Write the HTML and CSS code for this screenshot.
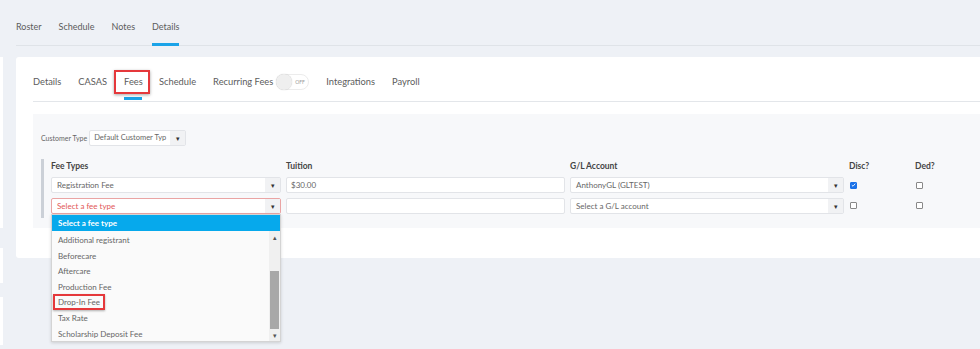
FILE: index.html
```html
<!DOCTYPE html>
<html>
<head>
    <title>Class Details - Fees</title>
    <link rel="stylesheet" href="styles.css">
</head>
<body>
    <div class="page">
        <div class="side">
            <div class="side-block first"></div>
            <div class="side-block second"></div>
            <div class="side-block third"></div>
        </div>

        <div class="main">
            <div class="top-nav">
                <span class="top-tab">Roster</span>
                <span class="top-tab">Schedule</span>
                <span class="top-tab">Notes</span>
                <span class="top-tab active">Details</span>
            </div>

            <div class="card">
                <div class="sub-nav">
                    <span class="sub-tab">Details</span>
                    <span class="sub-tab">CASAS</span>
                    <span class="sub-tab active marked">Fees</span>
                    <span class="sub-tab">Schedule</span>
                    <span class="sub-tab with-toggle">Recurring Fees
                        <span class="toggle"><span class="knob"></span><span class="toggle-text">OFF</span></span>
                    </span>
                    <span class="sub-tab">Integrations</span>
                    <span class="sub-tab">Payroll</span>
                </div>

                <div class="panel">
                    <div class="customer-type">
                        <span class="small-label">Customer Type</span>
                        <div class="select small">
                            <span class="select-text">Default Customer Typ</span>
                            <span class="arrow">&#9662;</span>
                        </div>
                    </div>

                    <div class="fees">
                        <div class="fee-grid">
                            <div class="col-head">Fee Types</div>
                            <div class="col-head">Tuition</div>
                            <div class="col-head">G/L Account</div>
                            <div class="col-head">Disc?</div>
                            <div class="col-head">Ded?</div>

                            <div class="select">
                                <span class="select-text">Registration Fee</span>
                                <span class="arrow">&#9662;</span>
                            </div>
                            <div class="input">$30.00</div>
                            <div class="select">
                                <span class="select-text">AnthonyGL (GLTEST)</span>
                                <span class="arrow">&#9662;</span>
                            </div>
                            <div class="check-cell"><span class="check checked">
                                <svg viewBox="0 0 8 8" width="6" height="6"><path d="M1.3 4.2 L3.2 6 L6.8 1.8" fill="none" stroke="#fff" stroke-width="1.4"/></svg>
                            </span></div>
                            <div class="check-cell"><span class="check"></span></div>

                            <div class="select invalid open">
                                <span class="select-text">Select a fee type</span>
                                <span class="arrow">&#9662;</span>
                                <div class="dropdown">
                                    <div class="drop-head">Select a fee type</div>
                                    <div class="drop-body">
                                        <ul class="drop-list">
                                            <li>Additional registrant</li>
                                            <li>Beforecare</li>
                                            <li>Aftercare</li>
                                            <li>Production Fee</li>
                                            <li><span class="marked-item">Drop-In Fee</span></li>
                                            <li>Tax Rate</li>
                                            <li>Scholarship Deposit Fee</li>
                                        </ul>
                                        <div class="scrollbar">
                                            <span class="scroll-arrow">&#9652;</span>
                                            <span class="thumb"></span>
                                            <span class="scroll-arrow">&#9662;</span>
                                        </div>
                                    </div>
                                </div>
                            </div>
                            <div class="input"></div>
                            <div class="select">
                                <span class="select-text">Select a G/L account</span>
                                <span class="arrow">&#9662;</span>
                            </div>
                            <div class="check-cell"><span class="check"></span></div>
                            <div class="check-cell"><span class="check"></span></div>
                        </div>
                    </div>
                </div>
            </div>
        </div>
    </div>
</body>
</html>
```

FILE: styles.css
```css
body {
    margin: 0;
    background-color: #eef1f6;
    font-family: Lato, "Open Sans", sans-serif;
    color: #5c5c5c;
    height: 349px;
    overflow: hidden;
}
.page {
    display: flex;
}
.side {
    width: 3px;
    display: flex;
    flex-direction: column;
}
.side-block {
    background: #fff;
}
.side-block.first {
    margin-top: 57px;
    height: 171px;
}
.side-block.second {
    margin-top: 20px;
    height: 35px;
}
.side-block.third {
    margin-top: 14px;
    height: 48px;
}
.main {
    flex: 1;
    padding-left: 13px;
}

/* top tabs */
.top-nav {
    display: flex;
    gap: 17px;
    border-bottom: 1px solid #dfe3e8;
    height: 46px;
    box-sizing: border-box;
}
.top-tab {
    font-size: 9px;
    line-height: 14px;
    padding-top: 20px;
    height: 23px;
    color: #5c5c5c;
}
.top-tab.active {
    border-bottom: 3px solid #1aa3e8;
}

/* card */
.card {
    margin-top: 11px;
    background: #fff;
    border-radius: 3px 0 0 3px;
    padding: 0 0 30px 17px;
    height: 171px;
}
.sub-nav {
    display: flex;
    align-items: flex-start;
    gap: 17px;
    border-bottom: 1px solid #e3e6ea;
    height: 45px;
    box-sizing: border-box;
}
.sub-tab {
    position: relative;
    font-size: 9.3px;
    line-height: 14px;
    padding-top: 18px;
    height: 22px;
    color: #5c5c5c;
    display: flex;
    align-items: flex-start;
}
.sub-tab.active {
    border-bottom: 3px solid #1aa3e8;
    width: 18px;
}
.sub-tab.marked::after {
    content: "";
    position: absolute;
    left: -10px;
    right: -8px;
    top: 13px;
    height: 20px;
    border: 2px solid #e5383b;
    box-shadow: 0 1px 3px rgba(0, 0, 0, 0.35);
}
.toggle {
    position: relative;
    margin-left: 3px;
    margin-top: -1px;
    width: 33px;
    height: 16px;
    border: 1px solid #ececec;
    border-radius: 9px;
    box-sizing: border-box;
    background: #fff;
}
.knob {
    position: absolute;
    left: -1px;
    top: -1px;
    width: 16px;
    height: 16px;
    border-radius: 50%;
    background: #efefef;
    box-shadow: 0 0 1px rgba(0, 0, 0, 0.25);
}
.toggle-text {
    position: absolute;
    left: 18px;
    top: 4px;
    font-size: 5px;
    line-height: 6px;
    color: #999;
}

/* gray panel */
.panel {
    margin-top: 12px;
    background: #f7f8fa;
    height: 114px;
    padding: 16px 0 0 8px;
    box-sizing: border-box;
}
.customer-type {
    display: flex;
    align-items: center;
    gap: 2px;
}
.small-label {
    font-size: 7px;
    color: #666;
}
.select {
    position: relative;
    display: flex;
    height: 16px;
    border: 1px solid #e2e4e8;
    border-radius: 2px;
    background: #fff;
    box-sizing: border-box;
    font-size: 8px;
    color: #666;
}
.select.small {
    width: 97px;
}
.select-text {
    flex: 1;
    min-width: 0;
    padding-left: 5px;
    line-height: 14px;
    white-space: nowrap;
    overflow: hidden;
    text-overflow: clip;
}
.select.small .select-text {
    font-size: 7.5px;
    padding-left: 4px;
}
.arrow {
    width: 15px;
    flex-shrink: 0;
    background: #f1f2f4;
    text-align: center;
    font-size: 7px;
    line-height: 14px;
    color: #333;
}
.select.invalid {
    border-color: #eaa4a4;
}
.select.invalid .select-text {
    color: #e25757;
}

.fees {
    margin-top: 13px;
    border-left: 3px solid #cbd0d7;
    padding: 0 0 4px 7px;
}
.fee-grid {
    display: grid;
    grid-template-columns: 230px 279px 274px 61px 60px;
    column-gap: 5px;
    row-gap: 4px;
    align-items: center;
}
.fee-grid .select:nth-child(n+11) {
    margin-top: 1px;
}
.col-head {
    font-size: 8.5px;
    font-weight: bold;
    color: #444;
    line-height: 14px;
}
.input {
    height: 16px;
    border: 1px solid #e2e4e8;
    border-radius: 2px;
    background: #fff;
    box-sizing: border-box;
    font-size: 8px;
    color: #666;
    padding-left: 4px;
    line-height: 14px;
}
.check-cell {
    display: flex;
    padding-left: 1px;
}
.check {
    width: 7px;
    height: 7px;
    box-sizing: border-box;
    border: 1px solid #888;
    border-radius: 1px;
    background: #fff;
    display: flex;
    align-items: center;
    justify-content: center;
}
.check.checked {
    background: #1b72e8;
    border-color: #1b72e8;
}

/* open dropdown */
.dropdown {
    position: absolute;
    left: -1px;
    top: 15px;
    width: 230px;
    height: 128px;
    background: #fafafa;
    border: 1px solid #d4d4d4;
    box-sizing: border-box;
    box-shadow: 0 1px 3px rgba(0, 0, 0, 0.15);
    z-index: 2;
}
.drop-head {
    height: 16px;
    background: #06a9ec;
    color: #fff;
    font-weight: bold;
    font-size: 8px;
    line-height: 16px;
    padding-left: 6px;
}
.drop-body {
    display: flex;
    height: 110px;
}
.drop-list {
    flex: 1;
    list-style: none;
    margin: 0;
    padding: 2px 0 0 0;
}
.drop-list li {
    height: 15.6px;
    line-height: 15.6px;
    padding-left: 6px;
    font-size: 8px;
    color: #666;
}
.marked-item {
    position: relative;
}
.marked-item::after {
    content: "";
    position: absolute;
    left: -5px;
    right: -5px;
    top: -3px;
    bottom: -3px;
    border: 2px solid #e5383b;
    box-shadow: 0 1px 2px rgba(0, 0, 0, 0.3);
}
.scrollbar {
    width: 11px;
    background: #f0f0f0;
    display: flex;
    flex-direction: column;
    align-items: center;
}
.scroll-arrow {
    font-size: 7px;
    line-height: 12px;
    height: 12px;
    color: #555;
}
.scroll-arrow:first-child {
    margin-bottom: 28px;
}
.thumb {
    width: 9px;
    height: 58px;
    background: #a8a8a8;
}
```
